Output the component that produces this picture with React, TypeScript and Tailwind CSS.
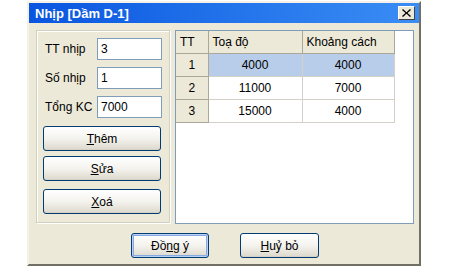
import React from 'react';

const rows = [
  { tt: '1', toaDo: '4000', kc: '4000', selected: true },
  { tt: '2', toaDo: '11000', kc: '7000', selected: false },
  { tt: '3', toaDo: '15000', kc: '4000', selected: false },
];

const XpButton: React.FC<{ className?: string; isDefault?: boolean; children: React.ReactNode }> = ({
  className = '',
  isDefault = false,
  children,
}) => (
  <button
    className={`flex items-center justify-center rounded-[3px] border border-[#003c74] bg-gradient-to-b from-white via-[#f4f3ee] to-[#dcd8cc] text-[12px] text-black ${
      isDefault ? 'shadow-[inset_0_0_0_1px_#b9d1f5,inset_0_0_0_2px_#86a9e3]' : 'shadow-[inset_0_-1px_0_#d6d0c5]'
    } ${className}`}
  >
    {children}
  </button>
);

const Field: React.FC<{ label: string; value: string }> = ({ label, value }) => (
  <div className="flex items-center h-[22px]">
    <span className="w-[52px] text-[12px]">{label}</span>
    <div className="w-[65px] h-[22px] border border-[#7f9db9] bg-white pl-[3px] flex items-center text-[12px]">
      {value}
    </div>
  </div>
);

export default function App() {
  return (
    <div className="w-[450px] h-[267px] bg-white font-['Liberation_Sans',Arial,sans-serif] text-black">
      <div className="ml-[27px] mt-[1px] w-[394px] h-[265px] flex flex-col border-2 border-t-[#f3f1e8] border-l-[#f3f1e8] border-r-[#716f64] border-b-[#716f64] bg-[#ece9d8]">
        {/* title bar */}
        <div className="h-[20px] shrink-0 flex items-center justify-between pl-[6px] pr-[4px] bg-gradient-to-r from-[#0a55e0] to-[#3a8df4]">
          <span className="text-[13px] font-bold text-white leading-none">Nhịp [Dầm D-1]</span>
          <div className="w-[17px] h-[14px] flex items-center justify-center bg-[#ece9d8] border border-t-white border-l-white border-r-[#404040] border-b-[#404040]">
            <svg width="9" height="8" viewBox="0 0 9 8">
              <path d="M1 0 L4.5 3.2 L8 0 L9 1 L5.5 4 L9 7 L8 8 L4.5 4.8 L1 8 L0 7 L3.5 4 L0 1 Z" fill="#000" />
            </svg>
          </div>
        </div>

        {/* content */}
        <div className="flex gap-[5px] pl-[7px] pt-[7px]">
          {/* group box */}
          <div className="w-[134px] h-[193px] border border-[#d0d0bf] shadow-[inset_1px_1px_0_#fff,1px_1px_0_#fff] pt-[7px] pl-[8px] flex flex-col">
            <div className="flex flex-col gap-[7px]">
              <Field label="TT nhịp" value="3" />
              <Field label="Số nhịp" value="1" />
              <Field label="Tổng KC" value="7000" />
            </div>
            <div className="flex flex-col mt-[8px] -ml-[2px]">
              <XpButton className="w-[118px] h-[25px]">
                <span><u>T</u>hêm</span>
              </XpButton>
              <XpButton className="w-[118px] h-[25px] mt-[5px]">
                <span><u>S</u>ửa</span>
              </XpButton>
              <XpButton className="w-[118px] h-[25px] mt-[8px]">
                <span><u>X</u>oá</span>
              </XpButton>
            </div>
          </div>

          {/* grid */}
          <div className="w-[239px] h-[194px] border border-[#7f9db9] bg-white">
            <table className="border-collapse text-[12px]">
              <thead>
                <tr className="h-[22px]">
                  <th className="w-[32px] bg-[#ece9d8] border-r border-b border-[#aca899] font-normal text-left pl-[4px]">TT</th>
                  <th className="w-[94px] bg-[#ece9d8] border-r border-b border-[#aca899] font-normal text-left pl-[4px]">Toạ độ</th>
                  <th className="w-[92px] bg-[#ece9d8] border-r border-b border-[#aca899] font-normal text-left pl-[4px]">Khoảng cách</th>
                </tr>
              </thead>
              <tbody>
                {rows.map((r) => (
                  <tr key={r.tt} className="h-[23px]">
                    <td className="bg-[#ece9d8] border-r border-b border-[#aca899] text-center">{r.tt}</td>
                    <td className={`${r.selected ? 'bg-[#b8cde9]' : 'bg-white'} border-r border-b border-[#d4d0c8] text-center`}>{r.toaDo}</td>
                    <td className={`${r.selected ? 'bg-[#b8cde9]' : 'bg-white'} border-r border-b border-[#d4d0c8] text-center`}>{r.kc}</td>
                  </tr>
                ))}
              </tbody>
            </table>
          </div>
        </div>

        {/* bottom buttons */}
        <div className="flex justify-center gap-[31px] pt-[9px] pl-[2px]">
          <XpButton isDefault className="w-[78px] h-[25px]">
            <span>Đồ<u>n</u>g ý</span>
          </XpButton>
          <XpButton className="w-[79px] h-[25px]">
            <span><u>H</u>uỷ bỏ</span>
          </XpButton>
        </div>
      </div>
    </div>
  );
}
